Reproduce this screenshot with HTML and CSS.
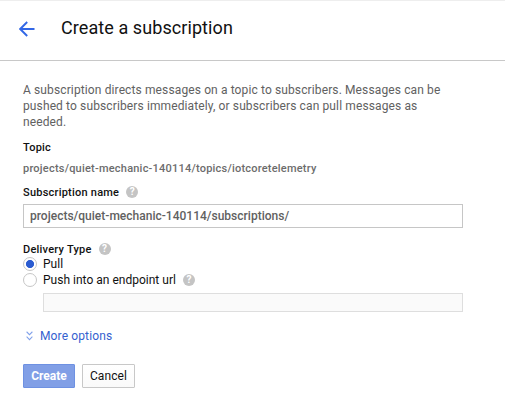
FILE: index.html
```html
<!DOCTYPE html>
<html lang="en">
<head>
<meta charset="utf-8">
<title>Create a subscription</title>
<link rel="stylesheet" href="styles.css">
</head>
<body>
<header class="header">
  <svg class="back" width="16" height="16" viewBox="0 0 16 16"><path d="M15.5 8H1.4M8.2 1L1.2 8L8.2 15" fill="none" stroke="#3267e6" stroke-width="1.9"/></svg>
  <h1 class="title">Create a subscription</h1>
</header>
<main class="form">
  <p class="intro">A subscription directs messages on a topic to subscribers. Messages can be<br>pushed to subscribers immediately, or subscribers can pull messages as<br>needed.</p>
  <div class="label topic-label"><span class="text">Topic</span></div>
  <div class="topic">projects/quiet-mechanic-140114/topics/iotcoretelemetry</div>
  <div class="label name-label"><span class="text">Subscription name</span><span class="help">?</span></div>
  <div class="field">projects/quiet-mechanic-140114/subscriptions/</div>
  <div class="label delivery-label"><span class="text">Delivery Type</span><span class="help">?</span></div>
  <div class="option"><span class="radio checked"></span><span>Pull</span></div>
  <div class="option"><span class="radio"></span><span>Push into an endpoint url</span><span class="help">?</span></div>
  <div class="endpoint"></div>
  <div class="more">
    <svg width="7" height="10" viewBox="0 0 8 10" preserveAspectRatio="none"><path d="M.7 .8L4 3.8L7.3 .8M.7 5.6L4 8.6L7.3 5.6" fill="none" stroke="#7fa0ea" stroke-width="1.2"/></svg>
    <span>More options</span>
  </div>
  <div class="actions">
    <div class="button primary">Create</div>
    <div class="button">Cancel</div>
  </div>
</main>
</body>
</html>
```
FILE: styles.css
```css
* { box-sizing: border-box; }
body {
  margin: 0;
  height: 409px;
  background: #fff;
  color: #111;
  font: 12px/16px Roboto, "Liberation Sans", sans-serif;
  letter-spacing: 0.01px;
  white-space: nowrap;
  overflow: hidden;
}
.header {
  display: flex;
  align-items: center;
  gap: 26px;
  height: 61px;
  padding: 0 19px 4px;
  border-top: 1px solid #eee;
  border-bottom: 1px solid #c8c8c8;
}
.title {
  margin: 0;
  padding-bottom: 2px;
  font-size: 18px;
  line-height: 24px;
  font-weight: 400;
  letter-spacing: 0.08px;
}
.form { width: 463px; padding: 21px 0 0 23px; }
.intro { margin: 0; color: #616161; letter-spacing: 0.12px; }
.label {
  display: flex;
  align-items: center;
  gap: 7px;
  height: 16px;
  font-size: 11px;
  font-weight: 500;
  letter-spacing: 0.23px;
}
.text { padding-top: 2px; }
.topic-label { margin-top: 9px; }
.topic {
  height: 16px;
  margin-top: 5px;
  padding-top: 1px;
  color: #6c6c6c;
  font-size: 11px;
  font-weight: 500;
  letter-spacing: 0.22px;
}
.name-label { margin-top: 8px; }
.help {
  width: 12px;
  height: 12px;
  border-radius: 50%;
  background: #c4c4c4;
  color: #fff;
  font-size: 10px;
  line-height: 12px;
  font-weight: 700;
  letter-spacing: 0;
  text-align: center;
}
.field {
  height: 24px;
  margin-top: 4px;
  padding-left: 6px;
  border: 1px solid #c6c6c6;
  color: #616161;
  line-height: 22px;
  font-weight: 500;
}
.delivery-label { margin-top: 13px; }
.option { display: flex; align-items: center; height: 16px; }
.delivery-label + .option { margin-top: -1px; }
.radio {
  width: 14px;
  height: 14px;
  margin-right: 6px;
  border: 1px solid #c6c6c6;
  border-radius: 50%;
}
.checked { background: radial-gradient(circle, #2a5bd0 3.7px, #fff 4.4px); }
.option .help { margin-left: 7px; }
.endpoint {
  height: 19px;
  margin: 5px 0 0 20px;
  border: 1px solid #dedede;
  background: #fafafa;
}
.more {
  display: flex;
  align-items: center;
  gap: 7px;
  height: 16px;
  margin: 16px 0 0 3px;
  color: #3461cf;
  letter-spacing: 0.13px;
}
.more svg { margin-top: -1px; }
.actions { display: flex; gap: 7px; margin-top: 20px; }
.button {
  width: 53px;
  height: 24px;
  border: 1px solid #c8c8c8;
  border-radius: 1px;
  background: linear-gradient(#fff, #fafafa);
  line-height: 22px;
  letter-spacing: 0.12px;
  text-align: center;
}
.primary {
  width: 52px;
  border-color: #6e91e2;
  background: #819fe6;
  color: #fff;
  font-weight: 700;
  letter-spacing: 0;
}
```
